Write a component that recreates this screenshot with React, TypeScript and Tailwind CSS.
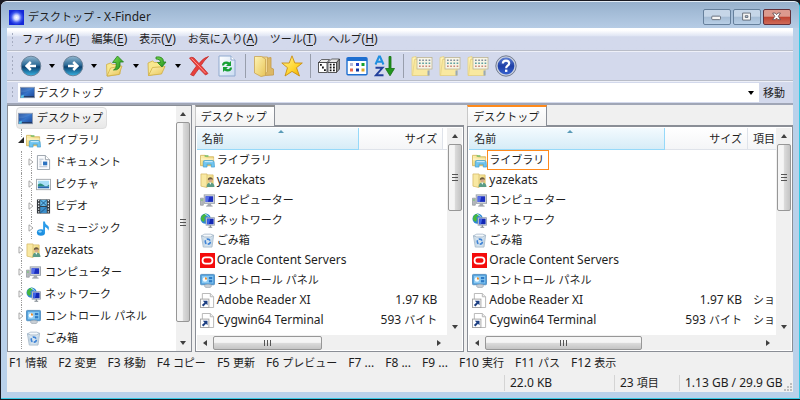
import type { ReactNode } from "react";
import { clsx } from "clsx";

const CJK_RUN = /([\u3000-\u30ff\u4e00-\u9fff]+)/;

// Latin text is set one size above the Japanese text, so both look equally tall
const Label = ({ text }: { text: string }) => (
  <>
    {text.split(CJK_RUN).map((run, i) =>
      i % 2 === 1 ? (
        <span key={i} className="text-[11px]">
          {run}
        </span>
      ) : (
        run
      ),
    )}
  </>
);

const Svg = ({ children }: { children: ReactNode }) => (
  <svg viewBox="0 0 16 16" className="size-[15px] shrink-0" aria-hidden="true">
    {children}
  </svg>
);

const ToolSvg = ({ children }: { children: ReactNode }) => (
  <svg viewBox="0 0 22 22" className="size-[22px]" aria-hidden="true">
    {children}
  </svg>
);

const Gradients = () => (
  <svg className="absolute size-0" aria-hidden="true">
    <defs>
      <linearGradient id="folder" x1="0" y1="0" x2="1" y2="1">
        <stop offset="0" stopColor="#fdf3b4" />
        <stop offset="1" stopColor="#e8c558" />
      </linearGradient>
      <linearGradient id="screen" x1="0" y1="0" x2="1" y2="1">
        <stop offset="0" stopColor="#15357f" />
        <stop offset="0.5" stopColor="#3674c9" />
        <stop offset="1" stopColor="#1b4597" />
      </linearGradient>
      <linearGradient id="ball" x1="0" y1="0" x2="0" y2="1">
        <stop offset="0" stopColor="#93b9d2" />
        <stop offset="0.45" stopColor="#2c6a96" />
        <stop offset="0.55" stopColor="#0c4270" />
        <stop offset="1" stopColor="#37b4e4" />
      </linearGradient>
      <linearGradient id="help" x1="0" y1="0" x2="0" y2="1">
        <stop offset="0" stopColor="#5d7ed2" />
        <stop offset="0.5" stopColor="#1f3fa6" />
        <stop offset="1" stopColor="#3560cf" />
      </linearGradient>
      <linearGradient id="sheet" x1="0" y1="0" x2="1" y2="1">
        <stop offset="0" stopColor="#ffffff" />
        <stop offset="1" stopColor="#c9dcf2" />
      </linearGradient>
      <linearGradient id="star" x1="0" y1="0" x2="1" y2="1">
        <stop offset="0" stopColor="#fff59a" />
        <stop offset="0.6" stopColor="#ffd52e" />
        <stop offset="1" stopColor="#e9a400" />
      </linearGradient>
      <linearGradient id="green" x1="0" y1="0" x2="1" y2="1">
        <stop offset="0" stopColor="#7bdc4d" />
        <stop offset="1" stopColor="#1d8d1d" />
      </linearGradient>
      <radialGradient id="app">
        <stop offset="0" stopColor="#ffffff" />
        <stop offset="0.3" stopColor="#d4dcff" />
        <stop offset="0.7" stopColor="#3b55ee" />
        <stop offset="1" stopColor="#1328d8" />
      </radialGradient>
    </defs>
  </svg>
);

const DesktopIcon = () => (
  <Svg>
    <rect x="0.5" y="2.5" width="15" height="11" fill="url(#screen)" stroke="#8d9bb2" />
    <path d="M1 8Q8 8 15 3V3H1Z" fill="#6da3e6" opacity="0.35" />
    <path d="M1 12.5H15" stroke="#20304f" />
    <path d="M1 11.5L4 10.5V13.5H1Z" fill="#56c3e8" />
  </Svg>
);

const LibraryIcon = () => (
  <Svg>
    <path d="M0.5 13.5V2.5H5.5L7 4H14.5V13.5Z" fill="url(#folder)" stroke="#d6bb6a" />
    <path d="M1 6.5H14.5" stroke="#fffbe0" />
    <path d="M5 3.2H9" stroke="#74bb62" strokeWidth="1.4" />
    <path d="M3.5 15V9.5Q3.5 8 5 8H13Q14.5 8 15 9.5L15.5 15H12V12H7.5V15Z" fill="#6fc4f0" stroke="#3f9bd0" strokeWidth="0.7" />
    <path d="M5 9.2H13.5" stroke="#d6f1fd" />
  </Svg>
);

const UserIcon = () => (
  <Svg>
    <path d="M6 2H14V14.5H6Z" fill="url(#folder)" stroke="#d6bb6a" strokeWidth="0.8" />
    <path d="M1 1H7.5V15.5L1 14Z" fill="#f8e8a2" stroke="#d6bb6a" strokeWidth="0.8" />
    <circle cx="11" cy="7.5" r="2.4" fill="#d8ad88" />
    <path d="M8.4 7.4Q8.2 4.6 11 4.6Q13.8 4.6 13.6 7.4Q12.5 6 8.4 7.4Z" fill="#6d5c42" />
    <path d="M7 15Q7.2 10.2 11 10.2Q15.2 10.2 15.5 15Z" fill="#5b9c86" />
    <path d="M9.8 10.2L11 12.5L12.2 10.2Z" fill="#fff" />
  </Svg>
);

const ComputerIcon = () => (
  <Svg>
    <path d="M0.5 5.5H3.5V13H0.5Z" fill="#b5b9bd" stroke="#93989e" strokeWidth="0.8" />
    <rect x="1.2" y="7" width="1.6" height="1" fill="#53cf4b" />
    <rect x="4.5" y="2" width="11" height="9" fill="#d5d9de" stroke="#9aa1aa" />
    <rect x="6" y="3.5" width="8" height="6" fill="#1b2fc0" />
    <path d="M6 3.5H10L8.5 9.5H6Z" fill="#546ce8" />
    <path d="M8.5 11.5H11.5L12.5 13.8H7.5Z" fill="#a6abb0" />
    <path d="M6.5 14H13.5" stroke="#9a9fa5" />
  </Svg>
);

const NetworkIcon = () => (
  <Svg>
    <circle cx="6" cy="6" r="5.5" fill="#2e86d6" />
    <path d="M2 3Q4 0.5 7.5 1L6.5 3.5L4.5 4.5L5.5 7L4 9.5L1.5 8Q0 5.5 2 3Z" fill="#47b83e" />
    <path d="M5.5 1.5Q8 2 9 4" stroke="#c9ecff" fill="none" />
    <rect x="6.5" y="5" width="9" height="8" fill="#dfe4ea" stroke="#8f98a4" strokeWidth="0.8" />
    <rect x="7.5" y="6" width="7" height="6" fill="#1329b5" />
    <path d="M7.5 6H11L9.5 12H7.5Z" fill="#3d63e6" />
    <path d="M11 13V15M9 15.2H13" stroke="#7d868f" strokeWidth="1.2" />
  </Svg>
);

const ControlPanelIcon = () => (
  <Svg>
    <rect x="0.5" y="1.5" width="15" height="11" rx="1" fill="#4f9edb" stroke="#5590c0" />
    <rect x="2" y="3" width="12" height="8" fill="#8ccaf2" />
    <circle cx="5.3" cy="7" r="2.4" fill="#f4fbff" />
    <path d="M5.3 7V4.6A2.4 2.4 0 0 1 7.7 7Z" fill="#e98b27" />
    <rect x="9.5" y="4.2" width="3.6" height="2.4" fill="#2d7ac5" />
    <rect x="9.5" y="7.6" width="3.6" height="2.4" fill="#2d7ac5" />
    <ellipse cx="8.5" cy="13.8" rx="3.8" ry="1.9" fill="#c9cfd5" stroke="#9aa3ab" strokeWidth="0.6" />
  </Svg>
);

const TrashIcon = () => (
  <Svg>
    <path d="M1.5 3L14.5 2.5L12.8 15H3.5Z" fill="#d5e3ee" stroke="#9db2c4" strokeWidth="0.8" />
    <path d="M1.5 3L5 1.2H11.5L14.5 2.5L11 4.2H5Z" fill="#f4f8fb" stroke="#9db2c4" strokeWidth="0.8" />
    <circle cx="8.3" cy="9.2" r="2.7" fill="none" stroke="#3e83d6" strokeWidth="1.7" strokeDasharray="4.2 1.4" />
    <path d="M3 5L4.5 14M13 5L11.8 14" stroke="#b9cddd" strokeWidth="0.8" />
  </Svg>
);

const OracleIcon = () => (
  <Svg>
    <rect width="16" height="16" fill="#f40b0b" />
    <rect x="2.7" y="4.7" width="10.6" height="6.6" rx="3.3" fill="none" stroke="#fff" strokeWidth="1.9" />
  </Svg>
);

const ShortcutIcon = () => (
  <Svg>
    <path d="M2.5 0.5H11L14.5 4V15.5H2.5Z" fill="#fff" stroke="#b4b4b4" />
    <path d="M11 0.5V4H14.5" fill="#eee" stroke="#b4b4b4" />
    <rect x="0.5" y="6.5" width="9" height="9" fill="#fff" stroke="#a4a4a4" />
    <path d="M3 8.2H8V13L6.4 11.5L3.6 14.3L2 12.8L4.8 10Z" fill="#1c3f83" />
  </Svg>
);

const DocumentIcon = () => (
  <Svg>
    <path d="M1.5 0.5H10L14.5 5V15.5H1.5Z" fill="#fbfcfe" stroke="#9aa2ab" />
    <path d="M10 0.5V5H14.5" fill="#fff" stroke="#9aa2ab" />
    <path d="M3.5 4.5H8M3.5 6.5H6M3.5 8.5H6M3.5 10.5H6M3.5 12.5H12" stroke="#b4bfcc" />
    <rect x="7.5" y="7" width="4.5" height="4" fill="#2e73c0" />
  </Svg>
);

const PictureIcon = () => (
  <Svg>
    <rect x="0.5" y="2.5" width="15" height="11" fill="#fff" stroke="#a2a7ac" />
    <rect x="2" y="4" width="12" height="8" fill="#a9def7" />
    <path d="M2 8Q5 5.5 8 8.5T14 8V10H2Z" fill="#2e8f7c" />
    <path d="M2 10H14V12H2Z" fill="#2a67b1" />
  </Svg>
);

const VideoIcon = () => (
  <Svg>
    <rect x="1" y="0.5" width="14" height="15" fill="#33383d" />
    <rect x="4.5" y="1" width="7" height="6.5" fill="#62b8e8" />
    <rect x="4.5" y="8.5" width="7" height="6.5" fill="#3c8fcb" />
    <path d="M4.5 1L11.5 7.5M11.5 1L4.5 7.5M4.5 15L11.5 8.5" stroke="#1d5687" />
    <path d="M2.8 1V15M13.2 1V15" stroke="#e4e9ed" strokeWidth="1.4" strokeDasharray="1.5 1.5" />
  </Svg>
);

const MusicIcon = () => (
  <Svg>
    <ellipse cx="5.3" cy="12.2" rx="4.3" ry="3.4" fill="#1d8fe0" />
    <path d="M7.6 12.5V0.5H9.4Q9.6 3.4 12.4 4.8Q15 6.8 12.8 10.5Q13 7.5 9.6 6.4V12.5Z" fill="#2b9cea" />
    <ellipse cx="4.3" cy="11.2" rx="2" ry="1.2" fill="#92d4fa" />
  </Svg>
);

const BackIcon = () => (
  <ToolSvg>
    <circle cx="11" cy="11" r="9.8" fill="url(#ball)" stroke="#6b8299" />
    <path d="M10.8 7L6.6 11L10.8 15M7 11H16" fill="none" stroke="#fff" strokeWidth="2.5" />
  </ToolSvg>
);

const ForwardIcon = () => (
  <ToolSvg>
    <circle cx="11" cy="11" r="9.8" fill="url(#ball)" stroke="#6b8299" />
    <path d="M11.2 7L15.4 11L11.2 15M15 11H6" fill="none" stroke="#fff" strokeWidth="2.5" />
  </ToolSvg>
);

const UpIcon = () => (
  <ToolSvg>
    <path d="M3 21L2.5 9.5L6.5 8L8.5 9.5H16V19L5 21Z" fill="#f8e88e" stroke="#cfae45" strokeWidth="0.8" />
    <path d="M3 21L6.5 13L18 11L15 19.5Z" fill="url(#folder)" stroke="#cfae45" strokeWidth="0.8" />
    <path d="M9.5 15Q13 13.5 12 7.5H8.5L13.5 1L19.5 7H16Q17 15.5 9.5 15Z" fill="url(#green)" stroke="#23821f" strokeWidth="0.8" />
  </ToolSvg>
);

const OpenFolderIcon = () => (
  <ToolSvg>
    <path d="M2.5 20.5L2 8L6.5 6L8.5 7.5H15.5V18Z" fill="#f8e88e" stroke="#cfae45" strokeWidth="0.8" />
    <path d="M2.5 20.5L6.5 12.5L19 11.5L15.5 19Z" fill="url(#folder)" stroke="#cfae45" strokeWidth="0.8" />
    <path d="M10 2Q17.5 1 17.5 7H20L16 12L11.5 7.5H14.5Q14.5 4 10 4Z" fill="url(#green)" stroke="#23821f" strokeWidth="0.8" />
  </ToolSvg>
);

const DeleteIcon = () => (
  <ToolSvg>
    <path d="M1.5 3Q4 1.5 6 3L11 8.5Q15.5 2.5 20.5 1.5Q16 5.5 13 10.5L20 18.5L17.5 20L11 13.5Q8 17.5 5.5 21L2.5 19.5Q5.5 15 8.5 11Z" fill="#e8403c" stroke="#c23130" strokeWidth="0.8" />
    <path d="M3.5 3.5L11 11L17.5 18" stroke="#ff8f87" fill="none" />
  </ToolSvg>
);

const RefreshIcon = () => (
  <ToolSvg>
    <path d="M3 1H15L19 5V21H3Z" fill="url(#sheet)" stroke="#8fa9cf" />
    <path d="M15 1V5H19" fill="#fff" stroke="#8fa9cf" />
    <path d="M6 10.5Q6 6.5 10.5 6.5Q12.3 6.5 13.3 7.5L15 6V11H10L11.7 9.2Q8.5 7.8 8 10.5Z" fill="#17a034" />
    <path d="M16 12.5Q16 16.5 11.5 16.5Q9.7 16.5 8.7 15.5L7 17V12H12L10.3 13.8Q13.5 15.2 14 12.5Z" fill="#17a034" />
  </ToolSvg>
);

const FoldersIcon = () => (
  <ToolSvg>
    <path d="M12 3.5L18 2.5V13L20.5 14V20L12 20.5Z" fill="#dcb866" stroke="#c49a48" strokeWidth="0.8" />
    <path d="M7 2H14.5V17L9 21Z" fill="#f1d895" stroke="#c9a352" strokeWidth="0.8" />
    <path d="M1.5 1.5H8.5L12.5 4V20.5L8 21.5L1.5 18Z" fill="url(#folder)" stroke="#c9a352" strokeWidth="0.8" />
  </ToolSvg>
);

const StarIcon = () => (
  <ToolSvg>
    <path d="M11 0.8L13.8 8H21.3L15.5 12.7L18.5 21L11 16.4L4 21L6.5 12.7L0.8 8H8.2Z" fill="url(#star)" stroke="#c98e14" strokeWidth="0.9" />
  </ToolSvg>
);

const DiceIcon = () => (
  <ToolSvg>
    <path d="M0.5 7.5L3.5 4.5H11.5L9 7.5Z" fill="#e9e9e9" stroke="#333" strokeWidth="0.7" />
    <rect x="0.6" y="7.5" width="8.4" height="10" fill="#fff" stroke="#333" strokeWidth="0.8" />
    <path d="M10 7.5L13.5 4H21.5L18.5 7.5Z" fill="#e9e9e9" stroke="#333" strokeWidth="0.7" />
    <path d="M18.5 7.5L21.5 4V14L18.5 17.5Z" fill="#8d8d8d" stroke="#333" strokeWidth="0.7" />
    <rect x="10" y="7.5" width="8.5" height="10" fill="#fff" stroke="#333" strokeWidth="0.8" />
    <path d="M2 9H3.8V10.8H2ZM4 11.6H5.8V13.4H4ZM6 14.2H7.8V16H6ZM11.7 8.7H13.5V10.5H11.7ZM15 8.7H16.8V10.5H15ZM11.7 11.6H13.5V13.4H11.7ZM15 11.6H16.8V13.4H15ZM11.7 14.5H13.5V16.3H11.7ZM15 14.5H16.8V16.3H15Z" fill="#111" />
  </ToolSvg>
);

const ViewIcon = () => (
  <ToolSvg>
    <rect x="1" y="2.7" width="20" height="17" rx="1" fill="#fff" stroke="#1e6fd0" strokeWidth="1.4" />
    <path d="M1 3H21V6H1Z" fill="#1e6fd0" />
    <path d="M4 8H7V11H4Z" fill="#b5b9d8" />
    <path d="M10 8H13V11H10Z" fill="#2443c7" />
    <path d="M15.5 8H18.5V11H15.5Z" fill="#15a02d" />
    <path d="M4 13.5H7V16.5H4Z" fill="#ea6a54" />
    <path d="M10 13.5H13V16.5H10Z" fill="#10349d" />
    <path d="M15.5 13.5H18.5V16.5H15.5Z" fill="#e0a92a" />
  </ToolSvg>
);

const SortIcon = () => (
  <ToolSvg>
    <path d="M1.5 9.5L5 1.5H6L9.5 9.5M3 6.8H8" fill="none" stroke="#1f8fe0" strokeWidth="2" />
    <path d="M1.5 12.8H8.5L2 20.2H9.5" fill="none" stroke="#23409c" strokeWidth="2" />
    <path d="M15 1.5H17V13.5H20.5L16 20.8L11.5 13.5H15Z" fill="#22961f" stroke="#15700f" strokeWidth="0.8" />
  </ToolSvg>
);

const GridFolderIcon = () => (
  <ToolSvg>
    <path d="M1 2.5L5 1.5V20.5H1Z" fill="#fff2b5" stroke="#e3cf82" strokeWidth="0.8" />
    <path d="M3.5 4.5H18V20.5H1.5Z" fill="#f9e9a0" stroke="#e3cf82" strokeWidth="0.8" />
    <rect x="6" y="2.5" width="15" height="11.5" fill="#f8f5e6" stroke="#bcb493" strokeWidth="0.8" />
    <path d="M8 5.2H19.5" stroke="#7d8c9c" strokeWidth="1.5" strokeDasharray="1.7 1.5" />
    <path d="M8 8.2H19.5" stroke="#5d9fa0" strokeWidth="1.5" strokeDasharray="1.7 1.5" />
    <path d="M8 11.2H19.5" stroke="#c8887a" strokeWidth="1.5" strokeDasharray="1.7 1.5" />
    <path d="M17.5 15.5V20.5" stroke="#9aa9b5" strokeWidth="2" />
  </ToolSvg>
);

const HelpIcon = () => (
  <ToolSvg>
    <circle cx="11" cy="11" r="10.2" fill="#c9d0de" stroke="#737c91" strokeWidth="1" />
    <circle cx="11" cy="11" r="8.4" fill="url(#help)" />
    <path d="M7.8 8.5Q8 5.6 11 5.6Q14.2 5.6 14.2 8.3Q14.2 9.8 12.5 10.8Q11.2 11.6 11.2 13.2" fill="none" stroke="#fff" strokeWidth="2.2" />
    <rect x="10" y="14.6" width="2.4" height="2.3" fill="#fff" />
  </ToolSvg>
);

type Tool = { name: string; icon?: ReactNode; menu?: boolean };

const tools: Tool[] = [
  { name: "戻る", icon: <BackIcon />, menu: true },
  { name: "進む", icon: <ForwardIcon />, menu: true },
  { name: "上へ", icon: <UpIcon />, menu: true },
  { name: "開く", icon: <OpenFolderIcon />, menu: true },
  { name: "削除", icon: <DeleteIcon /> },
  { name: "更新", icon: <RefreshIcon /> },
  { name: "sep1" },
  { name: "フォルダ", icon: <FoldersIcon /> },
  { name: "お気に入り", icon: <StarIcon /> },
  { name: "sep2" },
  { name: "ランダム", icon: <DiceIcon /> },
  { name: "表示", icon: <ViewIcon /> },
  { name: "並べ替え", icon: <SortIcon /> },
  { name: "sep3" },
  { name: "一覧 1", icon: <GridFolderIcon /> },
  { name: "一覧 2", icon: <GridFolderIcon /> },
  { name: "一覧 3", icon: <GridFolderIcon /> },
  { name: "ヘルプ", icon: <HelpIcon /> },
];

const menus = [
  { label: "ファイル", hotkey: "F" },
  { label: "編集", hotkey: "E" },
  { label: "表示", hotkey: "V" },
  { label: "お気に入り", hotkey: "A" },
  { label: "ツール", hotkey: "T" },
  { label: "ヘルプ", hotkey: "H" },
];

const treeItems = [
  { label: "ライブラリ", icon: <LibraryIcon />, depth: 1, state: "open" },
  { label: "ドキュメント", icon: <DocumentIcon />, depth: 2, state: "closed" },
  { label: "ピクチャ", icon: <PictureIcon />, depth: 2, state: "closed" },
  { label: "ビデオ", icon: <VideoIcon />, depth: 2, state: "closed" },
  { label: "ミュージック", icon: <MusicIcon />, depth: 2, state: "closed" },
  { label: "yazekats", icon: <UserIcon />, depth: 1, state: "closed" },
  { label: "コンピューター", icon: <ComputerIcon />, depth: 1, state: "closed" },
  { label: "ネットワーク", icon: <NetworkIcon />, depth: 1, state: "closed" },
  { label: "コントロール パネル", icon: <ControlPanelIcon />, depth: 1, state: "closed" },
  { label: "ごみ箱", icon: <TrashIcon />, depth: 1, state: "leaf" },
];

const files = [
  { name: "ライブラリ", icon: <LibraryIcon />, size: "", kind: "" },
  { name: "yazekats", icon: <UserIcon />, size: "", kind: "" },
  { name: "コンピューター", icon: <ComputerIcon />, size: "", kind: "" },
  { name: "ネットワーク", icon: <NetworkIcon />, size: "", kind: "" },
  { name: "ごみ箱", icon: <TrashIcon />, size: "", kind: "" },
  { name: "Oracle Content Servers", icon: <OracleIcon />, size: "", kind: "" },
  { name: "コントロール パネル", icon: <ControlPanelIcon />, size: "", kind: "" },
  { name: "Adobe Reader XI", icon: <ShortcutIcon />, size: "1.97 KB", kind: "ショ" },
  { name: "Cygwin64 Terminal", icon: <ShortcutIcon />, size: "593 バイト", kind: "ショ" },
];

const functionKeys = [
  "F1 情報",
  "F2 変更",
  "F3 移動",
  "F4 コピー",
  "F5 更新",
  "F6 プレビュー",
  "F7 ...",
  "F8 ...",
  "F9 ...",
  "F10 実行",
  "F11 パス",
  "F12 表示",
];

const Caret = ({ className }: { className?: string }) => (
  <svg viewBox="0 0 6 4" className={clsx("h-1 w-1.5", className)} aria-hidden="true">
    <path d="M0 0H6L3 4Z" fill="currentColor" />
  </svg>
);

const Grip = () => (
  <span className="my-1 w-[3px] shrink-0 self-stretch bg-[radial-gradient(circle,#a4abbf_1px,transparent_1px)] bg-[size:3px_4px]" />
);

const TitleBar = () => (
  <header className="flex h-[26px] items-center justify-between bg-linear-to-b from-[#97b1cd] to-[#b6cce5] px-2">
    <div className="flex items-center gap-1 pt-1">
      <Svg>
        <rect width="16" height="16" fill="#1328d8" />
        <rect width="16" height="16" fill="url(#app)" />
      </Svg>
      <h1>
        <Label text="デスクトップ - X-Finder" />
      </h1>
    </div>
    <div className="flex gap-0.5 pt-1">
      <WindowButton name="最小化">
        <rect x="9" y="8" width="10" height="4" rx="1" fill="#f6f6f6" stroke="#5b6470" />
      </WindowButton>
      <WindowButton name="最大化">
        <path d="M10 4.5H19V12.5H10ZM13 7.5V9.5H16V7.5Z" fill="#f6f6f6" fillRule="evenodd" stroke="#5b6470" />
      </WindowButton>
      <WindowButton name="閉じる" close>
        <path d="M10 4.5H13L14.5 6.3L16 4.5H19L16.5 8.2L19 12H16L14.5 10.2L13 12H10L12.5 8.2Z" fill="#fff" stroke="#5a4346" strokeWidth="0.9" />
      </WindowButton>
    </div>
  </header>
);

const WindowButton = ({ name, close, children }: { name: string; close?: boolean; children: ReactNode }) => (
  <button
    type="button"
    aria-label={name}
    className={clsx(
      "h-4 w-7 rounded-xs border",
      close
        ? "border-[#63303a] bg-linear-to-b from-[#dc9a8e] from-45% via-[#bd4230] via-50% to-[#cf6a58]"
        : "border-[#66809c] bg-linear-to-b from-[#c6d6e8] from-45% via-[#a5bcd5] via-50% to-[#b8cfe6]",
    )}
  >
    <svg viewBox="1 1 28 16" className="h-3.5 w-6.5" aria-hidden="true">
      {children}
    </svg>
  </button>
);

const MenuBar = () => (
  <nav className="flex h-[22px] items-center bg-linear-to-b from-white from-10% via-[#e1e6f4] via-35% to-[#d3d9ec] to-40% pl-1">
    <Grip />
    <ul className="flex gap-3 pl-2">
      {menus.map((m) => (
        <li key={m.hotkey}>
          <button type="button">
            <Label text={m.label} />(<span className="underline underline-offset-2">{m.hotkey}</span>)
          </button>
        </li>
      ))}
    </ul>
  </nav>
);

const ToolBar = () => (
  <div className="flex h-[31px] items-center border-y border-t-[#b9bdc8] border-b-[#b9bdc8] bg-[#d3d9ec] pl-1 shadow-[inset_0_1px_0_#eef0f8]">
    <Grip />
    <div className="flex items-center pl-[3px]">
      {tools.map((tool) =>
        tool.icon ? (
          <span key={tool.name} className="flex">
            <button type="button" aria-label={tool.name} className="flex w-7 justify-center">
              {tool.icon}
            </button>
            {tool.menu && (
              <button type="button" aria-label={`${tool.name} メニュー`} className="flex w-3.5 items-center justify-center">
                <Caret className="text-black" />
              </button>
            )}
          </span>
        ) : (
          <span key={tool.name} className="flex w-[9px] justify-center">
            <span className="h-6 w-px bg-[#989eac]" />
          </span>
        ),
      )}
    </div>
  </div>
);

const AddressBar = () => (
  <form className="flex h-6 items-stretch border-b-2 border-[#a0a6b6] bg-[#d3d9ec] pl-1 pt-px shadow-[inset_0_1px_0_#eef0f8]">
    <Grip />
    <div className="my-px ml-1 flex flex-1 items-center gap-0.5 bg-white px-0.5">
      <DesktopIcon />
      <input aria-label="アドレス" defaultValue="デスクトップ" className="min-w-0 flex-1 bg-transparent text-[11px] outline-none" />
      <button type="button" aria-label="履歴" className="flex w-3 justify-center">
        <Caret className="text-black" />
      </button>
    </div>
    <button type="button" className="pl-1 pr-2 text-[11px]">
      移動
    </button>
  </form>
);

const Arrow = ({ dir }: { dir: "up" | "down" | "left" | "right" }) => (
  <button type="button" aria-label={dir} className="flex size-4 shrink-0 items-center justify-center">
    <svg
      viewBox="0 0 6 4"
      className={clsx("h-1 w-1.5", dir === "up" && "rotate-180", dir === "left" && "rotate-90", dir === "right" && "-rotate-90")}
      aria-hidden="true"
    >
      <path d="M0 0H6L3 4Z" fill="#404040" />
    </svg>
  </button>
);

const VScroll = ({ thumb }: { thumb: string }) => (
  <div className="flex w-[15px] shrink-0 flex-col items-center bg-[#f0f0f0]">
    <Arrow dir="up" />
    <div className="flex w-3.5 flex-1 flex-col">
      <div className={clsx("flex flex-col items-center justify-center gap-0.5 rounded-xs border border-[#979797] bg-linear-to-r from-[#f5f5f5] from-45% via-[#dcdcdc] via-50% to-[#c4c4c4]", thumb)}>
        <span className="h-px w-1.5 bg-[#555]" />
        <span className="h-px w-1.5 bg-[#555]" />
        <span className="h-px w-1.5 bg-[#555]" />
      </div>
    </div>
    <Arrow dir="down" />
  </div>
);

const HScroll = ({ thumb }: { thumb: string }) => (
  <div className="flex h-[15px] items-center bg-[#f0f0f0] pr-[15px]">
    <Arrow dir="left" />
    <div className="flex h-3.5 flex-1">
      <div className={clsx("flex items-center justify-center gap-0.5 rounded-xs border border-[#979797] bg-linear-to-b from-[#f5f5f5] from-45% via-[#dcdcdc] via-50% to-[#c4c4c4]", thumb)}>
        <span className="h-1.5 w-px bg-[#555]" />
        <span className="h-1.5 w-px bg-[#555]" />
        <span className="h-1.5 w-px bg-[#555]" />
      </div>
    </div>
    <Arrow dir="right" />
  </div>
);

const Branch = ({ state }: { state: string }) => (
  <span className="flex w-2.5 flex-col items-center self-stretch">
    <span className="w-0 flex-1 border-l border-dotted border-[#9a9a9a]" />
    {state === "open" && (
      <svg viewBox="0 0 6 6" className="size-1.5" aria-hidden="true">
        <path d="M6 0V6H0Z" fill="#262626" />
      </svg>
    )}
    {state === "closed" && (
      <svg viewBox="0 0 6 8" className="h-2 w-1.5" aria-hidden="true">
        <path d="M1 0.8L5 4L1 7.2Z" fill="#fff" stroke="#a6a6a6" />
      </svg>
    )}
    <span className={clsx("w-0 flex-1 border-l border-dotted border-[#9a9a9a]", state === "open" && "invisible")} />
  </span>
);

const FolderTree = () => (
  <aside className="flex w-[23.5%] min-w-0 border border-[#8a8e96] bg-white">
    <ul className="min-w-0 flex-1 overflow-hidden whitespace-nowrap pl-2 pt-px">
      <li className="flex h-[22px]">
        <span className="flex items-center gap-1 rounded border border-[#dedede] bg-linear-to-b from-[#f9f9f9] to-[#e8e8e8] pl-px pr-[3px]">
          <DesktopIcon />
          <Label text="デスクトップ" />
        </span>
      </li>
      {treeItems.map((item) => (
        <li key={item.label} className="flex h-[22px] items-center">
          {item.depth === 2 && (
            <span className="flex w-2.5 justify-center self-stretch">
              <span className="border-l border-dotted border-[#9a9a9a]" />
            </span>
          )}
          <Branch state={item.state} />
          <span className="flex items-center gap-1">
            {item.icon}
            <span>
              <Label text={item.label} />
            </span>
          </span>
        </li>
      ))}
    </ul>
    <VScroll thumb="h-[94%]" />
  </aside>
);

type PaneProps = { active?: boolean; className: string; sizeWidth: string; hThumb: string };

const FilePane = ({ active, className, sizeWidth, hThumb }: PaneProps) => (
  <section className={clsx("flex min-w-0 flex-col", className)}>
    <div role="tablist" className="flex h-[21px]">
      <button
        type="button"
        role="tab"
        aria-selected={!!active}
        className={clsx(
          "flex items-center border-x border-t-2 border-r-[#8a8e96] border-l-[#c8c8c8] bg-linear-to-b from-white to-[#f2f2f2] pl-[5px] pr-[7px]",
          active ? "border-t-[#ff8a1c]" : "border-t-[#8e8e8e]",
        )}
      >
        <Label text="デスクトップ" />
      </button>
      <span className="flex-1 border-b border-[#8a8e96]" />
    </div>
    <div className="flex flex-1 flex-col border border-[#8a8e96] bg-white p-px">
      <div className="flex flex-1">
        <div className="min-w-0 flex-1 overflow-hidden">
          <table className="w-full table-fixed border-separate border-spacing-0 whitespace-nowrap">
            <thead>
              <tr className="h-[22px]">
                <th className="relative border-r border-b border-[#96d9f9] bg-linear-to-b from-[#f3fafe] to-[#d6ecf7] pl-[5px] text-left font-normal">
                  <Label text="名前" />
                  <svg viewBox="0 0 6 3" className="absolute top-0.5 left-1/2 h-[3px] w-1.5" aria-hidden="true">
                    <path d="M0 3L3 0L6 3Z" fill="#5a9bb8" />
                  </svg>
                </th>
                <th className={clsx("border-r border-b border-[#dfe3ea] bg-linear-to-b from-white to-[#f4f5f7] pr-[5px] text-right font-normal", sizeWidth)}>
                  <Label text="サイズ" />
                </th>
                {active ? (
                  <th className="w-[28px] border-b border-[#dfe3ea] bg-linear-to-b from-white to-[#f4f5f7] pl-[5px] text-left font-normal">
                    <Label text="項目" />
                  </th>
                ) : (
                  <th className="w-1 border-b border-[#dfe3ea]" />
                )}
              </tr>
            </thead>
            <tbody>
              {files.map((file, i) => (
                <tr key={file.name} className="h-5">
                  <td className="pl-[3px]">
                    <span className="flex h-5 items-center">
                      {file.icon}
                      <span
                        className={clsx(
                          "flex h-5 items-center whitespace-pre border pr-1 pl-px",
                          active && i === 0 ? "border-[#ff8a1c]" : "border-transparent",
                        )}
                      >
                        <span>
                          <Label text={file.name} />
                        </span>
                      </span>
                    </span>
                  </td>
                  <td className="pr-1.5 text-right">
                    <Label text={file.size} />
                  </td>
                  <td className={clsx(active && "pl-[5px]")}>{active && <Label text={file.kind} />}</td>
                </tr>
              ))}
            </tbody>
          </table>
        </div>
        <VScroll thumb="h-[38%]" />
      </div>
      <HScroll thumb={hThumb} />
    </div>
  </section>
);

const FunctionKeys = () => (
  <ul className="flex h-[22px] items-center gap-[11px] pl-0.5 whitespace-nowrap">
    {functionKeys.map((key) => (
      <li key={key}>
        <button type="button">
          <Label text={key} />
        </button>
      </li>
    ))}
  </ul>
);

const StatusBar = () => (
  <footer className="flex h-[18px] items-center justify-end whitespace-nowrap">
    <span className="w-[110px] border-l border-[#d4d4d4] pl-[5px]">22.0 KB</span>
    <span className="w-[65px] border-l border-[#d4d4d4] pl-[5px]">
      <Label text="23 項目" />
    </span>
    <span className="w-[105px] border-l border-[#d4d4d4] pl-[5px]">1.13 GB / 29.9 GB</span>
    <svg viewBox="0 0 9 9" className="size-[9px] self-end" aria-hidden="true">
      <path d="M6 0H8V2H6ZM3 3H5V5H3ZM6 3H8V5H6ZM0 6H2V8H0ZM3 6H5V8H3ZM6 6H8V8H6Z" fill="#bdbdbd" />
    </svg>
  </footer>
);

export default function App() {
  return (
    <div className="flex min-h-screen flex-col bg-[#191a22] pt-px pl-px font-['Noto_Sans','Noto_Sans_CJK_JP',sans-serif] text-xs leading-4 text-[#1e1e1e]">
      <Gradients />
      <div className="mb-px flex flex-1 flex-col overflow-hidden rounded-t-md border-t border-r border-b border-t-[#e4edf6] border-r-[#35c9e4] border-b-[#35c9e4] bg-[#b9d1ea]">
        <TitleBar />
        <div className="mx-1.5 mb-1.5 flex flex-1 flex-col bg-[#f0f0f0]">
          <MenuBar />
          <ToolBar />
          <AddressBar />
          <main className="flex flex-1 gap-[3px]">
            <FolderTree />
            <FilePane className="grow-[269] basis-0" sizeWidth="w-[84px]" hThumb="w-1/2" />
            <FilePane active className="grow-[325] basis-0" sizeWidth="w-[83px]" hThumb="w-[57%]" />
          </main>
          <FunctionKeys />
          <StatusBar />
        </div>
      </div>
    </div>
  );
}
